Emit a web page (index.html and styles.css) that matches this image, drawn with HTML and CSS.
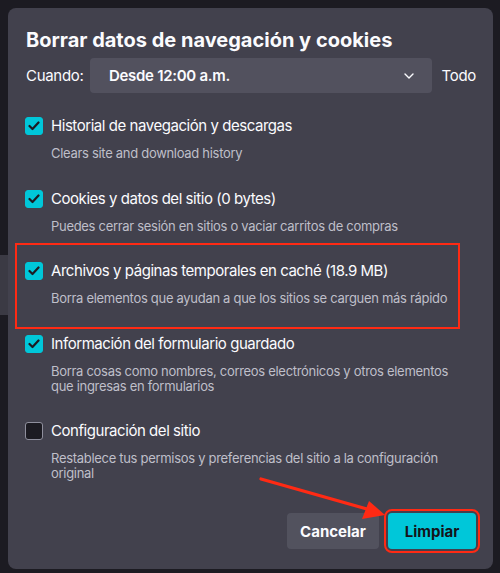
FILE: index.html
```html
<!DOCTYPE html>
<html lang="es">
<head>
<meta charset="utf-8">
<link rel="stylesheet" href="styles.css">
</head>
<body>
<div class="dialog">
  <h1 class="title">Borrar datos de navegación y cookies</h1>
  <div class="when">
    <span class="when-label">Cuando:</span>
    <div class="select">
      <span class="select-text">Desde 12:00 a.m.</span>
      <svg class="chevron" width="10" height="6" viewBox="0 0 10 6"><path d="M1 1 L5 5 L9 1" fill="none" stroke="#fbfbfe" stroke-width="1.4" stroke-linecap="round" stroke-linejoin="round"/></svg>
    </div>
    <span class="when-todo">Todo</span>
  </div>
  <ul class="items">
    <li class="item">
      <div class="item-row"><span class="box checked"><svg width="12" height="10" viewBox="0 0 12 10"><path d="M1.5 5 L4.5 8 L10.5 1.5" fill="none" stroke="#1c1b22" stroke-width="2.2" stroke-linecap="round" stroke-linejoin="round"/></svg></span><span class="item-label">Historial de navegación y descargas</span></div>
      <p class="item-desc">Clears site and download history</p>
    </li>
    <li class="item">
      <div class="item-row"><span class="box checked"><svg width="12" height="10" viewBox="0 0 12 10"><path d="M1.5 5 L4.5 8 L10.5 1.5" fill="none" stroke="#1c1b22" stroke-width="2.2" stroke-linecap="round" stroke-linejoin="round"/></svg></span><span class="item-label">Cookies y datos del sitio (0 bytes)</span></div>
      <p class="item-desc">Puedes cerrar sesión en sitios o vaciar carritos de compras</p>
    </li>
    <li class="item highlighted">
      <div class="item-row"><span class="box checked"><svg width="12" height="10" viewBox="0 0 12 10"><path d="M1.5 5 L4.5 8 L10.5 1.5" fill="none" stroke="#1c1b22" stroke-width="2.2" stroke-linecap="round" stroke-linejoin="round"/></svg></span><span class="item-label">Archivos y páginas temporales en caché (18.9 MB)</span></div>
      <p class="item-desc">Borra elementos que ayudan a que los sitios se carguen más rápido</p>
    </li>
    <li class="item">
      <div class="item-row"><span class="box checked"><svg width="12" height="10" viewBox="0 0 12 10"><path d="M1.5 5 L4.5 8 L10.5 1.5" fill="none" stroke="#1c1b22" stroke-width="2.2" stroke-linecap="round" stroke-linejoin="round"/></svg></span><span class="item-label">Información del formulario guardado</span></div>
      <p class="item-desc">Borra cosas como nombres, correos electrónicos y otros elementos<br>que ingresas en formularios</p>
    </li>
    <li class="item">
      <div class="item-row"><span class="box"></span><span class="item-label">Configuración del sitio</span></div>
      <p class="item-desc">Restablece tus permisos y preferencias del sitio a la configuración<br>original</p>
    </li>
  </ul>
  <div class="actions">
    <button class="btn btn-cancel">Cancelar</button>
    <button class="btn btn-primary">Limpiar</button>
  </div>
  <svg class="arrow" width="140" height="50" viewBox="0 0 140 50">
    <line x1="2" y1="4" x2="108" y2="34" stroke="#ff2a14" stroke-width="3.2" stroke-linecap="round"/>
    <polygon points="126,40 103,44 110,26" fill="#ff2a14"/>
  </svg>
</div>
</body>
</html>
```

FILE: styles.css
```css
* { box-sizing: border-box; }
html, body { margin: 0; padding: 0; }
body {
  width: 500px;
  height: 573px;
  overflow: hidden;
  background:
    linear-gradient(#3b3a44, #3b3a44) 0 255px / 8px 60px no-repeat,
    #1c1b22;
  font-family: Inter, "Noto Sans", sans-serif;
  color: #fbfbfe;
}
.dialog {
  position: relative;
  margin: 8px 0 0 8px;
  width: 485px;
  height: 561px;
  background: #42414d;
  border-radius: 8px;
  padding: 20px 17px 20px 18px;
  display: flex;
  flex-direction: column;
}
.title {
  margin: 0;
  font-size: 20px;
  line-height: 24px;
  font-weight: 700;
  letter-spacing: 0;
}
.when {
  margin-top: 6px;
  display: flex;
  align-items: center;
  gap: 9px;
  font-size: 15px;
  letter-spacing: -0.3px;
}
.when-label { width: 55px; }
.select {
  width: 345px;
  height: 35px;
  background: #52515e;
  border-radius: 4px;
  display: flex;
  align-items: center;
  justify-content: space-between;
  padding: 0 18px 0 19px;
}
.select-text { font-weight: 600; }
.when-todo { margin-left: 1px; }
.items {
  list-style: none;
  margin: 23px 0 0 0;
  padding: 0;
  display: flex;
  flex-direction: column;
  gap: 27.5px;
}
.item { position: relative; }
.item-row {
  display: flex;
  align-items: center;
  gap: 8px;
  height: 20px;
  margin-left: -1px;
}
.box {
  width: 18px;
  height: 18px;
  border-radius: 3px;
  border: 1px solid #8f8f9d;
  background: #1c1b22;
  display: flex;
  align-items: center;
  justify-content: center;
  flex: none;
}
.box.checked {
  background: #00c7d9;
  border-color: #00c7d9;
}
.item-label {
  font-size: 15px;
  line-height: 20px;
  letter-spacing: -0.45px;
}
.item-desc {
  margin: 10px 0 0 25px;
  font-size: 13px;
  line-height: 15px;
  letter-spacing: -0.3px;
  color: #bfbfc9;
}
.highlighted::after {
  content: "";
  position: absolute;
  left: -11px;
  top: -18px;
  width: 441px;
  height: 82px;
  border: 2px solid #ff2a14;
}
.actions {
  margin-top: auto;
  display: flex;
  justify-content: flex-end;
  gap: 9px;
}
.btn {
  height: 36px;
  border: none;
  border-radius: 4px;
  font-family: inherit;
  font-size: 15px;
  font-weight: 700;
}
.btn-cancel {
  width: 92px;
  background: #52525e;
  color: #fbfbfe;
}
.btn-primary {
  width: 88px;
  background: #00c7d9;
  color: #15141a;
  outline: 2px solid #ff2a14;
  outline-offset: 2px;
}
.arrow {
  position: absolute;
  left: 251px;
  top: 467px;
}
```
